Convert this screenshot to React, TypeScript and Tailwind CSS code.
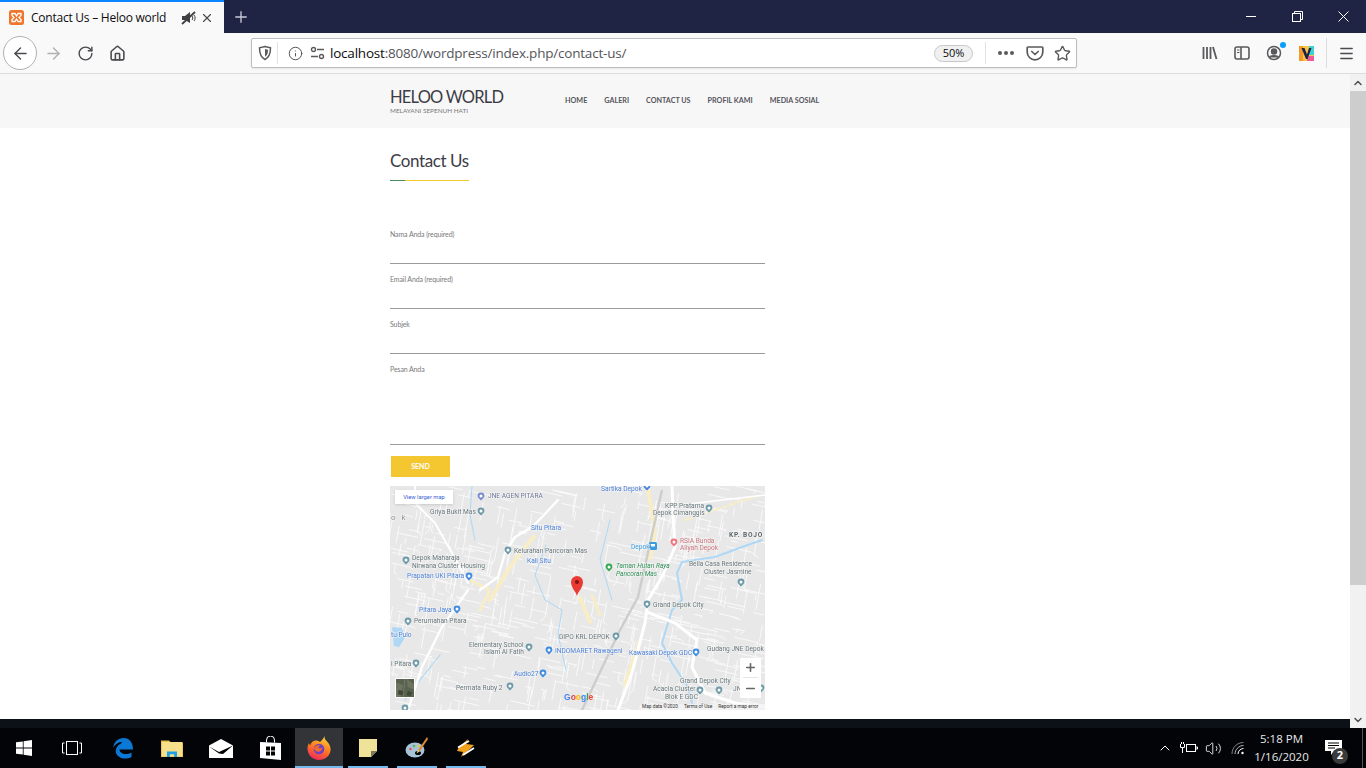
import React from "react";
import {
  ArrowLeft,
  ArrowRight,
  RotateCw,
  House,
  Info,
  Star,
  Menu,
  Minus,
  Plus,
  X,
  ChevronUp,
  ChevronDown,
  Volume2,
} from "lucide-react";

const SANS = "font-['Open_Sans','Liberation_Sans',sans-serif]";
const SITE = "font-['Lato','Liberation_Sans',sans-serif]";

// deterministic little street network for the map
function makeStreets() {
  let seed = 7;
  const rnd = () => {
    seed = (seed * 16807) % 2147483647;
    return seed / 2147483647;
  };
  const out: string[] = [];
  for (let i = 0; i < 620; i++) {
    const x = 390 + rnd() * 375;
    const y = 486 + rnd() * 224;
    const a = rnd() > 0.5 ? 0.22 : 1.75;
    const len = 6 + rnd() * 20;
    const x2 = x + Math.cos(a) * len;
    const y2 = y + Math.sin(a) * len;
    const bend = rnd() > 0.6 ? (rnd() - 0.5) * 10 : 0;
    out.push(`M${x.toFixed(1)} ${y.toFixed(1)}L${x2.toFixed(1)} ${y2.toFixed(1)}l${bend.toFixed(1)} ${(Math.abs(bend) * 0.8).toFixed(1)}`);
  }
  return out.join("");
}
const streets = makeStreets();

const GREY = "#66757a";
const BLUE = "#4a7fd6";

const mapLabels: [number, number, string, string?, string?][] = [
  [488, 498, "JNE AGEN PITARA", "#6e7896"],
  [601, 491, "Sartika Depok", BLUE],
  [665, 508, "KPP Pratama"],
  [653, 515, "Depok Cimanggis"],
  [631, 549, "Depok", "#3c9be0"],
  [680, 543, "RSIA Bunda", "#c9737c"],
  [680, 550, "Aliyah Depok", "#c9737c"],
  [616, 568, "Taman Hutan Raya", "#2f8f56", "italic"],
  [616, 576, "Pancoran Mas", "#2f8f56", "italic"],
  [689, 566, "Bella Casa Residence"],
  [704, 574, "Cluster Jasmine"],
  [430, 514, "Griya Bukit Mas"],
  [531, 530, "Situ Pitara", BLUE],
  [514, 553, "Kelurahan Pancoran Mas"],
  [527, 563, "Kali Situ", BLUE],
  [412, 560, "Depok Maharaja"],
  [412, 567.5, "Nirwana Cluster Housing"],
  [407, 578, "Prapatan UKI Pitara", BLUE],
  [419, 612, "Pitara Jaya", BLUE],
  [414, 623, "Perumahan Pitara"],
  [391, 637, "tu Pulo", BLUE],
  [469, 647, "Elementary School"],
  [484, 654, "Islam Al Fatih"],
  [559, 639, "DIPO KRL DEPOK"],
  [555, 653, "INDOMARET Rawageni", BLUE],
  [391, 666, "i Pitara"],
  [514, 676, "Audio27", BLUE],
  [456, 690, "Permata Ruby 2"],
  [653, 607, "Grand Depok City"],
  [629, 655, "Kawasaki Depok GDC", BLUE],
  [707, 651, "Gudang JNE Depok"],
  [680, 683, "Grand Depok City"],
  [653, 691, "Acacia Cluster"],
  [665, 699, "Blok E GDC"],
  [733, 691, "JNE"],
];

const mapPins: [number, number, string][] = [
  [481, 496, "#7b8bd0"],
  [647, 486, "#3f7fe0"],
  [709, 508, "#6c9aa8"],
  [674, 542, "#f0727a"],
  [609, 567, "#34a853"],
  [741, 582, "#6c9aa8"],
  [481, 511, "#6c9aa8"],
  [508, 550, "#6c9aa8"],
  [406, 560, "#6c9aa8"],
  [469, 576, "#3f8be0"],
  [457, 609, "#3f8be0"],
  [408, 621, "#6c9aa8"],
  [529, 647, "#6c9aa8"],
  [616, 636, "#6c9aa8"],
  [549, 650, "#3f8be0"],
  [416, 663, "#6c9aa8"],
  [543, 673, "#3f8be0"],
  [510, 686, "#6c9aa8"],
  [647, 604, "#6c9aa8"],
  [696, 652, "#3f8be0"],
  [700, 690, "#6c9aa8"],
  [719, 690, "#6c9aa8"],
  [761, 688, "#6c9aa8"],
  [405, 708, "#6c9aa8"],
];

function MapDrawing() {
  return (
    <svg viewBox="390 486 375 224" className="block w-full h-full blur-[0.35px]">
      <rect x="390" y="486" width="375" height="224" fill="#e8e8e8" />
      <path d={streets} fill="none" stroke="#fbfbfb" strokeWidth="0.9" />
      {/* built up patches */}
      <g fill="none" stroke="#f9edc4" strokeLinecap="round" strokeDasharray="5 3">
        <path d="M490 600L505 575L515 560L535 535" strokeWidth="4" />
        <path d="M580 598L590 622" strokeWidth="4" />
        <path d="M592 596L600 615" strokeWidth="3" />
        <path d="M648 490L655 530L650 560" strokeWidth="4" />
        <path d="M625 685L640 640" strokeWidth="4" />
        <path d="M685 520L760 495" strokeWidth="2" />
        <path d="M470 580L490 590L480 610" strokeWidth="3" />
      </g>
      {/* water */}
      <g fill="none" stroke="#aed8f5" strokeLinecap="round" strokeLinejoin="round">
        <path d="M762 540L742 547L715 557L682 562L677 573L682 600L672 610L662 643L672 663L688 687L692 703" strokeWidth="2" />
        <path d="M546 545L535 575L545 600L562 610L558 635L566 670" strokeWidth="1" />
        <path d="M440 655L420 680L405 700" strokeWidth="1.2" />
        <path d="M472 486L470 515L475 540" strokeWidth="1" />
        <path d="M610 520L600 560L612 600" strokeWidth="1" />
      </g>
      <path d="M392 627L402 628L405 638L399 647L394 646Z" fill="#aed8f5" />
      {/* railway */}
      <path d="M662 490L638 597L620 630L582 710" fill="none" stroke="#cdcdcd" strokeWidth="2.4" />
      {/* main roads */}
      <g fill="none" stroke="#ffffff" strokeLinecap="round" strokeLinejoin="round">
        <path d="M672 486L673 513L675 547L662 577L648 600L645 623L632 673L618 710" strokeWidth="3" />
        <path d="M647 612L675 623L697 640L692 667L705 693L735 703L765 707" strokeWidth="3" />
        <path d="M415 486L415 503L435 523L452 553L468 583" strokeWidth="2" />
        <path d="M468 590L442 627L422 667L408 710" strokeWidth="2.4" />
        <path d="M558 500L542 517L532 527L515 537L505 553L498 577L480 590" strokeWidth="2.4" />
        <path d="M680 505L765 495" strokeWidth="1.6" />
      </g>
      {mapPins.map(([x, y, c], i) => (
        <g key={i}>
          <path d={`M${x - 3.4} ${y}a3.4 3.4 0 1 1 6.8 0c0 1.8-2.2 3-3.4 4.6c-1.2-1.6-3.4-2.8-3.4-4.6z`} fill={c} />
          <circle cx={x} cy={y} r="1.5" fill="#fff" />
        </g>
      ))}
      {/* station marker next to Depok */}
      <rect x="649" y="542" width="8" height="8" rx="1.500" fill="#3c9be0" />
      <rect x="651" y="544" width="4" height="2.500" fill="#fff" />
      <g fontFamily="Roboto, sans-serif" fontSize="6.6" stroke="#f4f4f4" strokeWidth="1.2" paintOrder="stroke">
        {mapLabels.map(([x, y, t, c, st], i) => (
          <text key={i} x={x} y={y} fill={c ?? GREY} fontStyle={st ?? "normal"}>
            {t}
          </text>
        ))}
        <text x="729" y="537" fill="#5c6468" fontWeight="700" letterSpacing="0.8">KP. BOJO</text>
        <text x="391" y="520" fill="#8a9296" fontSize="8" letterSpacing="2">o k</text>
      </g>
      {/* red marker */}
      <path d="M577 596c-1.2-5-6-8-6-14a6 6 0 0 1 12 0c0 6-4.800 9-6 14z" fill="#ea3a34" />
      <circle cx="577" cy="582" r="2.100" fill="#7d1512" />
      {/* google */}
      <text x="564" y="700" fontFamily="'Liberation Sans', sans-serif" fontSize="8.500" fontWeight="700">
        <tspan fill="#4285f4">G</tspan>
        <tspan fill="#ea4335">o</tspan>
        <tspan fill="#fbbc05">o</tspan>
        <tspan fill="#4285f4">g</tspan>
        <tspan fill="#34a853">l</tspan>
        <tspan fill="#ea4335">e</tspan>
      </text>
    </svg>
  );
}

function SatelliteThumb() {
  return (
    <svg viewBox="0 0 20 20" className="block w-full h-full">
      <rect width="20" height="20" fill="#59624f" />
      <path d="M0 4L8 7L5 20H0zM12 0L20 6V12L13 9z" fill="#6d7460" />
      <path d="M3 12L9 14L7 18L2 17zM13 13L18 15L16 19L12 18z" fill="#3f4739" />
      <path d="M10 0L8 20" stroke="#8a8f7c" strokeWidth="0.6" />
    </svg>
  );
}

function MapBlock() {
  return (
    <div className="relative w-[375px] h-[224px] overflow-hidden">
      <MapDrawing />
      <div className="absolute left-[5px] top-[4px] w-[58px] h-[14px] bg-white flex items-center justify-center text-[5.800px] text-[#3a62d6] font-['Roboto',sans-serif] shadow-sm">
        View larger map
      </div>
      <div className="absolute left-[5px] top-[192px] w-[20px] h-[20px] border border-white overflow-hidden">
        <SatelliteThumb />
      </div>
      <div className="absolute left-[350px] top-[172px] w-[21px] h-[40px] bg-white flex flex-col items-center text-[#666666]">
        <div className="h-[20px] w-[15px] flex items-center justify-center border-b border-[#e6e6e6]">
          <Plus size={13} strokeWidth={3} />
        </div>
        <div className="h-[20px] flex items-center justify-center">
          <Minus size={13} strokeWidth={3} />
        </div>
      </div>
      <div className="absolute right-0 bottom-0 h-[6px] w-[124px] pl-[1px] bg-[#f2f2f2]/80 flex items-center gap-[6px] text-[4.800px] text-[#333333] font-['Roboto',sans-serif] whitespace-nowrap">
        <span>Map data ©2020</span>
        <span>Terms of Use</span>
        <span>Report a map error</span>
      </div>
    </div>
  );
}

function Field({ label, h = 22 }: { label: string; h?: number }) {
  return (
    <div className="w-[375px] mb-[8px]">
      <div className="h-[15px] flex items-center text-[7px] tracking-[-0.12px] text-[#7a7a7a] whitespace-nowrap">{label}</div>
      <div className="border-b border-[#9a9a9a]" style={{ height: h }} />
    </div>
  );
}

function Favicon() {
  return (
    <svg width="15" height="15" viewBox="0 0 15 15">
      <rect width="15" height="15" rx="2.500" fill="#f0762b" />
      <path d="M3 3.500h3L7.500 6 9 3.500h3v2L10 7.500l2 2v2H9L7.500 9 6 11.500H3v-2l2-2-2-2z" fill="none" stroke="#fff" strokeWidth="1.300" />
    </svg>
  );
}

function MutedIcon() {
  return (
    <svg width="16" height="16" viewBox="0 0 16 16" fill="#3f3f42" className="shrink-0">
      <path d="M1 6h3l5-4v11l-5-3H1z" />
      <path d="M1 14L14 2" stroke="#3f3f42" strokeWidth="1.800" />
      <path d="M11 6c1 1 1 3 0 4M13 5c1.500 2 1.500 4 0 6" fill="none" stroke="#3f3f42" strokeWidth="1" />
    </svg>
  );
}

function ShieldIcon() {
  return (
    <svg width="16" height="16" viewBox="0 0 16 16" fill="none">
      <path d="M8 1.500l5.500 1.300c0 6-1 9.500-5.500 11.700C3.500 12.300 2.500 8.800 2.500 2.800z" stroke="#5a5a5c" strokeWidth="1.500" />
      <path d="M8 4l3 .7c0 3.500-.7 5.500-3 7z" fill="#5a5a5c" />
    </svg>
  );
}

function PermissionIcon() {
  return (
    <svg width="15" height="14" viewBox="0 0 15 14" fill="none" stroke="#5a5a5c" strokeWidth="1.400" className="shrink-0">
      <circle cx="3.500" cy="3.500" r="2" />
      <path d="M7 3.500h7M1 10.500h7" />
      <circle cx="11.500" cy="10.500" r="2" />
    </svg>
  );
}

function PocketIcon() {
  return (
    <svg width="18" height="18" viewBox="0 0 18 18" fill="none" stroke="#5a5a5c" strokeWidth="1.700">
      <path d="M2 3h14a.8.8 0 0 1 .8.8V8a7.800 7.800 0 0 1-15.600 0V3.800A.8.8 0 0 1 2 3z" />
      <path d="M5.800 7.500L9 10.500l3.200-3" strokeLinecap="round" strokeLinejoin="round" />
    </svg>
  );
}

function LibraryIcon() {
  return (
    <svg width="16" height="16" viewBox="0 0 16 16" stroke="#5a5a5c" strokeWidth="1.800" fill="none">
      <path d="M1.500 2v12M5 2v12M8.500 2v12M11 2l3.500 12" />
    </svg>
  );
}

function SidebarIcon() {
  return (
    <svg width="16" height="16" viewBox="0 0 16 16" fill="none" stroke="#5a5a5c" strokeWidth="1.600">
      <rect x="1" y="2" width="14" height="12" rx="2" />
      <path d="M7 2v12" />
      <path d="M3 5h2.500M3 7.500h2.500" strokeWidth="1.100" />
    </svg>
  );
}

function AccountIcon() {
  return (
    <div className="relative w-[16px] h-[16px]">
      <svg width="16" height="16" viewBox="0 0 16 16" fill="none" stroke="#5a5a5c" strokeWidth="1.500">
        <circle cx="8" cy="8" r="6.500" />
        <circle cx="8" cy="6.500" r="2.500" fill="#5a5a5c" />
        <path d="M3.500 12.500c1-2.500 8-2.500 9 0" fill="#5a5a5c" />
      </svg>
      <div className="absolute -right-[4px] -top-[3px] w-[6px] h-[6px] rounded-full bg-[#0a9dff]" />
    </div>
  );
}

function VivaldiLikeIcon() {
  return (
    <svg width="15" height="15" viewBox="0 0 15 15">
      <rect width="15" height="15" rx="1.500" fill="#f6c644" />
      <rect x="10" width="5" height="9" fill="#3fd0d8" />
      <rect x="8" y="10" width="7" height="5" fill="#ec5a9a" />
      <rect width="4" height="15" fill="#f39a2b" />
      <path d="M2.500 2L7 13h1.500L12.500 2H10L8 8.500 5.500 2z" fill="#1d2148" />
    </svg>
  );
}

function WindowMin() {
  return (
    <svg width="11" height="11" viewBox="0 0 11 11" stroke="#fff" strokeWidth="1" fill="none">
      <path d="M0 5.500h10" />
    </svg>
  );
}

function WindowRestore() {
  return (
    <svg width="11" height="11" viewBox="0 0 11 11" stroke="#fff" strokeWidth="1" fill="none">
      <rect x="0.500" y="2.500" width="8" height="8" />
      <path d="M2.500 2.500V.5h8v8H8.500" />
    </svg>
  );
}

function WindowClose() {
  return (
    <svg width="11" height="11" viewBox="0 0 11 11" stroke="#fff" strokeWidth="1" fill="none">
      <path d="M.5.500l10 10M10.500.500l-10 10" />
    </svg>
  );
}

function WinLogo() {
  return (
    <svg width="16" height="16" viewBox="0 0 16 16" fill="#fff">
      <path d="M0 2.300l6.800-.9v6.200H0zM7.600 1.300L16 0v7.600H7.600zM0 8.400h6.800v6.200L0 13.700zM7.600 8.400H16V16l-8.400-1.300z" />
    </svg>
  );
}

function TaskViewIcon() {
  return (
    <svg width="20" height="14" viewBox="0 0 20 14" fill="none" stroke="#fff" strokeWidth="1">
      <rect x="4.500" y="0.500" width="11" height="13" />
      <path d="M2.500 2H.5v10h2M17.500 2h2v10h-2" />
    </svg>
  );
}

function EdgeIcon() {
  return (
    <svg width="20" height="21" viewBox="0 0 20 21">
      <path d="M.3 9.500C1 3.500 5.500 0 10.500 0 16.500 0 20 4.500 20 11.500H6.500c.3 4.500 7 6 12 3v4.500c-6 3-13.500 1.500-15.500-4-.7-2-.3-4 1-6C5.500 6 9 4.800 11 6.500c1 .9 1.300 1.500 1.500 2.200h-6C6.800 6.500 8 5 9.500 4 6 3.800 2.300 5.800.3 9.500z" fill="#0a78d4" />
    </svg>
  );
}

function ExplorerIcon() {
  return (
    <svg width="22" height="19" viewBox="0 0 22 19">
      <path d="M0 1.500h8l2 2h12V18H0z" fill="#e7bd4d" />
      <rect x="0.800" y="3" width="20.400" height="14.500" fill="#f6e08c" />
      <path d="M6 18v-5.500h10V18h-2.800v-2.800H8.800V18z" fill="#1f9ee8" />
    </svg>
  );
}

function MailIcon() {
  return (
    <svg width="24" height="19" viewBox="0 0 24 19">
      <path d="M0 6.500L12 0l12 6.500V19H0z" fill="#fff" />
      <path d="M0 7.500L10 13l14-6.500L14 15l-4-.5z" fill="#000" />
    </svg>
  );
}

function StoreIcon() {
  return (
    <svg width="21" height="24" viewBox="0 0 21 24" fill="#fff">
      <path d="M6.500 6.500V4a4 4 0 0 1 8 0v2.500" fill="none" stroke="#fff" strokeWidth="1" />
      <path d="M0 6l21 1v17L0 22z" />
      <path d="M6 10.500h4v4H6zM11 10.500h4v4h-4zM6 15.500h4v4H6zM11 15.500h4v4h-4z" fill="#000" />
    </svg>
  );
}

function FirefoxIcon() {
  return (
    <svg width="24" height="24" viewBox="0 0 24 24">
      <defs>
        <linearGradient id="ffg" x1="0.700" y1="0" x2="0.300" y2="1">
          <stop offset="0" stopColor="#ffd23a" />
          <stop offset="0.500" stopColor="#ff7a1f" />
          <stop offset="1" stopColor="#f0265f" />
        </linearGradient>
      </defs>
      <path d="M17.500 0c-.3 2.500 1 4 2.500 5.500 2.500 2.500 4 6 3.500 9C22.800 20 18 24 12 24 5.500 24 .5 19 .5 12.500c0-2 .5-4 1.500-5.500.2 1 .6 1.800 1.200 2.300C4 6.500 6.500 4.500 9 4.500c2 0 3 1 4 1.500 1-1 3.500-3 4.500-6z" fill="url(#ffg)" />
      <circle cx="12" cy="13" r="5.300" fill="#6f3fc4" />
      <path d="M7 12c1-2.500 4-3.500 6.500-3-1.500 1-2 2-2 3 1.500.5 3 .2 4-.8-.2 3-2.500 5-5 4.500C8.500 15.300 7.300 14 7 12z" fill="#f26a2c" />
    </svg>
  );
}

function NoteIcon() {
  return (
    <svg width="18" height="18" viewBox="0 0 18 18">
      <path d="M0 0h18v12l-6 6H0z" fill="#efe39a" />
      <path d="M18 12l-6 6v-6z" fill="#7d7a5a" />
    </svg>
  );
}

function PaintIcon() {
  return (
    <svg width="24" height="24" viewBox="0 0 24 24">
      <ellipse cx="10" cy="14" rx="9.500" ry="7.500" fill="#a7c3d8" />
      <ellipse cx="13" cy="17" rx="3" ry="2" fill="#000" />
      <circle cx="5.500" cy="13" r="1.300" fill="#e25555" />
      <circle cx="9" cy="10" r="1.300" fill="#5ab45a" />
      <circle cx="13.500" cy="10" r="1.300" fill="#e9c53c" />
      <path d="M22 1L13 14l1.800 1.300L23 3z" fill="#d88a3a" />
      <path d="M13 14l-1.500 3.500 3.300-2.200z" fill="#f4d27a" />
    </svg>
  );
}

function BoltIcon() {
  return (
    <svg width="20" height="20" viewBox="0 0 20 20">
      <path d="M3 9l9-8-2 5 8 1-4 4-9 8 2-5-6-1z" fill="#f0a11e" />
      <path d="M2 9.500L13 3M7 17l11-7" stroke="#fff" strokeWidth="1.800" fill="none" />
    </svg>
  );
}

function PowerIcon() {
  return (
    <svg width="18" height="14" viewBox="0 0 18 14" fill="none" stroke="#fff" strokeWidth="1">
      <rect x="6.500" y="3.500" width="9" height="7" />
      <path d="M15.500 6h2v2h-2" />
      <path d="M.5 3v3.500h4V3M1.500 1v2M3.500 1v2M2.500 6.500V12" />
    </svg>
  );
}

function WifiIcon() {
  return (
    <svg width="14" height="14" viewBox="0 0 14 14" fill="none" stroke="#fff" strokeWidth="1">
      <path d="M1 13C1 6.500 6 1.500 12.500 1.500" opacity="0.5" />
      <path d="M4 13c0-4.500 4-8.500 8.500-8.500" opacity="0.7" />
      <path d="M7 13c0-3 2.500-5.500 5.500-5.500" />
      <circle cx="11.500" cy="12" r="1.200" fill="#fff" stroke="none" />
    </svg>
  );
}

function NotifIcon() {
  return (
    <div className="relative w-[17px] h-[17px]">
      <svg width="17" height="15" viewBox="0 0 17 15" fill="#fff">
        <path d="M0 0h17v11h-8l-3 4v-4H0z" />
        <path d="M3 3h11M3 5.500h11M3 8h7" stroke="#000" strokeWidth="1" />
      </svg>
      <div className="absolute left-[7px] top-[8px] w-[16px] h-[16px] rounded-full bg-[#3b3b3b] text-white text-[11px] font-bold flex items-center justify-center font-['Open_Sans',sans-serif]">
        2
      </div>
    </div>
  );
}

function ToolSlot({ children, w = "w-[32px]" }: { children: React.ReactNode; w?: string }) {
  return <div className={`${w} h-[32px] flex items-center justify-center shrink-0`}>{children}</div>;
}

function BrowserChrome() {
  return (
    <div className={`shrink-0 ${SANS}`}>
      <div className="h-[33px] bg-[#1f2344] flex">
        <div className="w-[224px] bg-[#f9f9fa] border-t-2 border-[#0a84ff] flex items-center pl-[9px] pr-[10px] gap-[7px]">
          <Favicon />
          <span className="text-[12px] text-[#0c0c0d] whitespace-nowrap flex-1 tracking-[-0.24px]">Contact Us – Heloo world</span>
          <MutedIcon />
          <X size={14} className="text-[#4a4a4f] -ml-[4px] shrink-0" strokeWidth={2} />
        </div>
        <div className="w-[34px] flex items-center justify-center text-[#c9cadb]">
          <Plus size={18} strokeWidth={1.800} />
        </div>
        <div className="ml-auto flex">
          <div className="w-[46px] flex items-center justify-center"><WindowMin /></div>
          <div className="w-[46px] flex items-center justify-center"><WindowRestore /></div>
          <div className="w-[46px] flex items-center justify-center"><WindowClose /></div>
        </div>
      </div>
      <div className="h-[41px] bg-[#f9f9fa] border-b border-[#dcdcde] flex items-center pl-[3px] text-[#4a4a4f]">
        <div className="w-[34px] h-[34px] rounded-full bg-white border border-[#b1b1b3] flex items-center justify-center shrink-0">
          <ArrowLeft size={19} strokeWidth={1.800} />
        </div>
        <ToolSlot><ArrowRight size={19} strokeWidth={1.800} className="text-[#b1b1b3]" /></ToolSlot>
        <ToolSlot><RotateCw size={17} strokeWidth={2} /></ToolSlot>
        <ToolSlot><House size={17} strokeWidth={2.200} /></ToolSlot>
        <div className="ml-[118px] w-[826px] h-[30px] bg-white border border-[#bdbdbf] rounded-[2px] flex items-center shrink-0 shadow-[0_1px_2px_rgba(0,0,0,0.08)]">
          <div className="w-[25px] flex justify-center ml-[1px] border-r border-[#e2e2e3] h-[22px] items-center"><ShieldIcon /></div>
          <div className="w-[30px] flex justify-center ml-[2px]"><Info size={15} strokeWidth={1.500} /></div>
          <PermissionIcon />
          <span className="ml-[5px] text-[13.500px] text-[#0c0c0d] whitespace-nowrap tracking-[-0.21px]">
            localhost<span className="text-[#55555a]">:8080/wordpress/index.php/contact-us/</span>
          </span>
          <div className="ml-auto w-[39px] h-[17px] rounded-full bg-[#f0f0f0] border border-[#c8c8ca] text-[11px] text-[#0c0c0d] flex items-center justify-center">50%</div>
          <div className="ml-[12px] w-px h-[22px] bg-[#e2e2e3]" />
          <div className="w-[40px] flex justify-center gap-[2px]">
            <span className="w-[4px] h-[4px] rounded-full bg-[#5a5a5c]" />
            <span className="w-[4px] h-[4px] rounded-full bg-[#5a5a5c]" />
            <span className="w-[4px] h-[4px] rounded-full bg-[#5a5a5c]" />
          </div>
          <div className="w-[18px] flex justify-center"><PocketIcon /></div>
          <div className="w-[28px] ml-[4px] flex justify-center"><Star size={17} strokeWidth={2} className="text-[#5a5a5c]" /></div>
        </div>
        <div className="ml-auto flex items-center">
          <ToolSlot><LibraryIcon /></ToolSlot>
          <ToolSlot><SidebarIcon /></ToolSlot>
          <ToolSlot><AccountIcon /></ToolSlot>
          <ToolSlot><VivaldiLikeIcon /></ToolSlot>
          <div className="w-px h-[30px] bg-[#dcdcde] ml-[4px]" />
          <div className="w-[39px] flex justify-center"><Menu size={17} strokeWidth={2} className="text-[#4a4a4f]" /></div>
        </div>
      </div>
    </div>
  );
}

function Scrollbar() {
  return (
    <div className="w-[16px] shrink-0 bg-[#f1f1f1] flex flex-col items-center">
      <div className="h-[17px] flex items-center justify-center"><ChevronUp size={12} strokeWidth={3} className="text-[#505050]" /></div>
      <div className="w-full h-[494px] bg-[#cdcdcd]" />
      <div className="flex-1" />
      <div className="h-[17px] flex items-center justify-center"><ChevronDown size={12} strokeWidth={3} className="text-[#505050]" /></div>
    </div>
  );
}

const navItems = ["HOME", "GALERI", "CONTACT US", "PROFIL KAMI", "MEDIA SOSIAL"];

function SitePage() {
  return (
    <div className={`flex-1 min-w-0 flex flex-col bg-white ${SITE}`}>
      <div className="flex-1 overflow-hidden">
        <header className="h-[54px] bg-[#f7f7f7] pl-[390px] flex items-center">
          <div className="w-[175px]">
            <div className="text-[16.500px] leading-[20px] tracking-[-0.8px] text-[#3c3c46] whitespace-nowrap">HELOO WORLD</div>
            <div className="text-[6.400px] leading-[8px] text-[#77777c] whitespace-nowrap">MELAYANI SEPENUH HATI</div>
          </div>
          <nav className="flex gap-[17px] text-[7.200px] font-bold text-[#55555c] whitespace-nowrap">
            {navItems.map((n) => (
              <span key={n}>{n}</span>
            ))}
          </nav>
        </header>
        <main className="pl-[390px]">
          <h1 className="mt-[21px] text-[17px] leading-[24px] tracking-[-0.4px] text-[#3c3c46]">Contact Us</h1>
          <div className="mt-[7px] w-[79px] h-px flex">
            <div className="w-[15px] bg-[#4b8a5c]" />
            <div className="flex-1 bg-[#f4c92d]" />
          </div>
          <form className="mt-[46px]">
            <Field label="Nama Anda (required)" />
            <Field label="Email Anda (required)" />
            <Field label="Subjek" />
            <Field label="Pesan Anda" h={68} />
            <div className="ml-[1px] mt-[11px] w-[59px] h-[21px] bg-[#f4c731] text-white text-[7px] font-bold flex items-center justify-center">SEND</div>
          </form>
          <div className="mt-[9px]">
            <MapBlock />
          </div>
        </main>
      </div>
      <div className="h-[9px] bg-[#0c1117] shrink-0" />
    </div>
  );
}

function TaskSlot({ children, active, open }: { children: React.ReactNode; active?: boolean; open?: boolean }) {
  return (
    <div className={`relative w-[48px] h-[40px] flex items-center justify-center shrink-0 ${active ? "bg-[#333437]" : ""}`}>
      {children}
      {(open || active) && (
        <div className={`absolute bottom-0 h-[2px] bg-[#76b9ed] ${active ? "inset-x-0" : "inset-x-[4px]"}`} />
      )}
    </div>
  );
}

function Taskbar() {
  return (
    <div className={`h-[40px] shrink-0 bg-[#020408] flex items-center text-white ${SANS}`}>
      <TaskSlot><WinLogo /></TaskSlot>
      <TaskSlot><TaskViewIcon /></TaskSlot>
      <div className="flex gap-[1px] ml-[3px]">
        <TaskSlot><EdgeIcon /></TaskSlot>
        <TaskSlot><ExplorerIcon /></TaskSlot>
        <TaskSlot><MailIcon /></TaskSlot>
        <TaskSlot><StoreIcon /></TaskSlot>
        <TaskSlot active><FirefoxIcon /></TaskSlot>
        <TaskSlot open><NoteIcon /></TaskSlot>
        <TaskSlot open><PaintIcon /></TaskSlot>
        <TaskSlot open><BoltIcon /></TaskSlot>
      </div>
      <div className="ml-auto flex items-center h-full">
        <div className="w-[24px] flex justify-center"><ChevronUp size={16} strokeWidth={1.500} /></div>
        <div className="w-[24px] flex justify-center"><PowerIcon /></div>
        <div className="w-[24px] flex justify-center"><Volume2 size={17} strokeWidth={1.200} /></div>
        <div className="w-[26px] flex justify-center"><WifiIcon /></div>
        <div className="w-[61px] text-center text-[11.500px] leading-[18px] text-[#e8e8e8]">
          <div>5:18 PM</div>
          <div>1/16/2020</div>
        </div>
        <div className="w-[50px] pl-[13px]"><NotifIcon /></div>
        <div className="w-[4px] h-full border-l border-[#555555]" />
      </div>
    </div>
  );
}

export default function App() {
  return (
    <div className="w-[1366px] h-screen flex flex-col overflow-hidden">
      <BrowserChrome />
      <div className="flex-1 flex min-h-0">
        <SitePage />
        <Scrollbar />
      </div>
      <Taskbar />
    </div>
  );
}
